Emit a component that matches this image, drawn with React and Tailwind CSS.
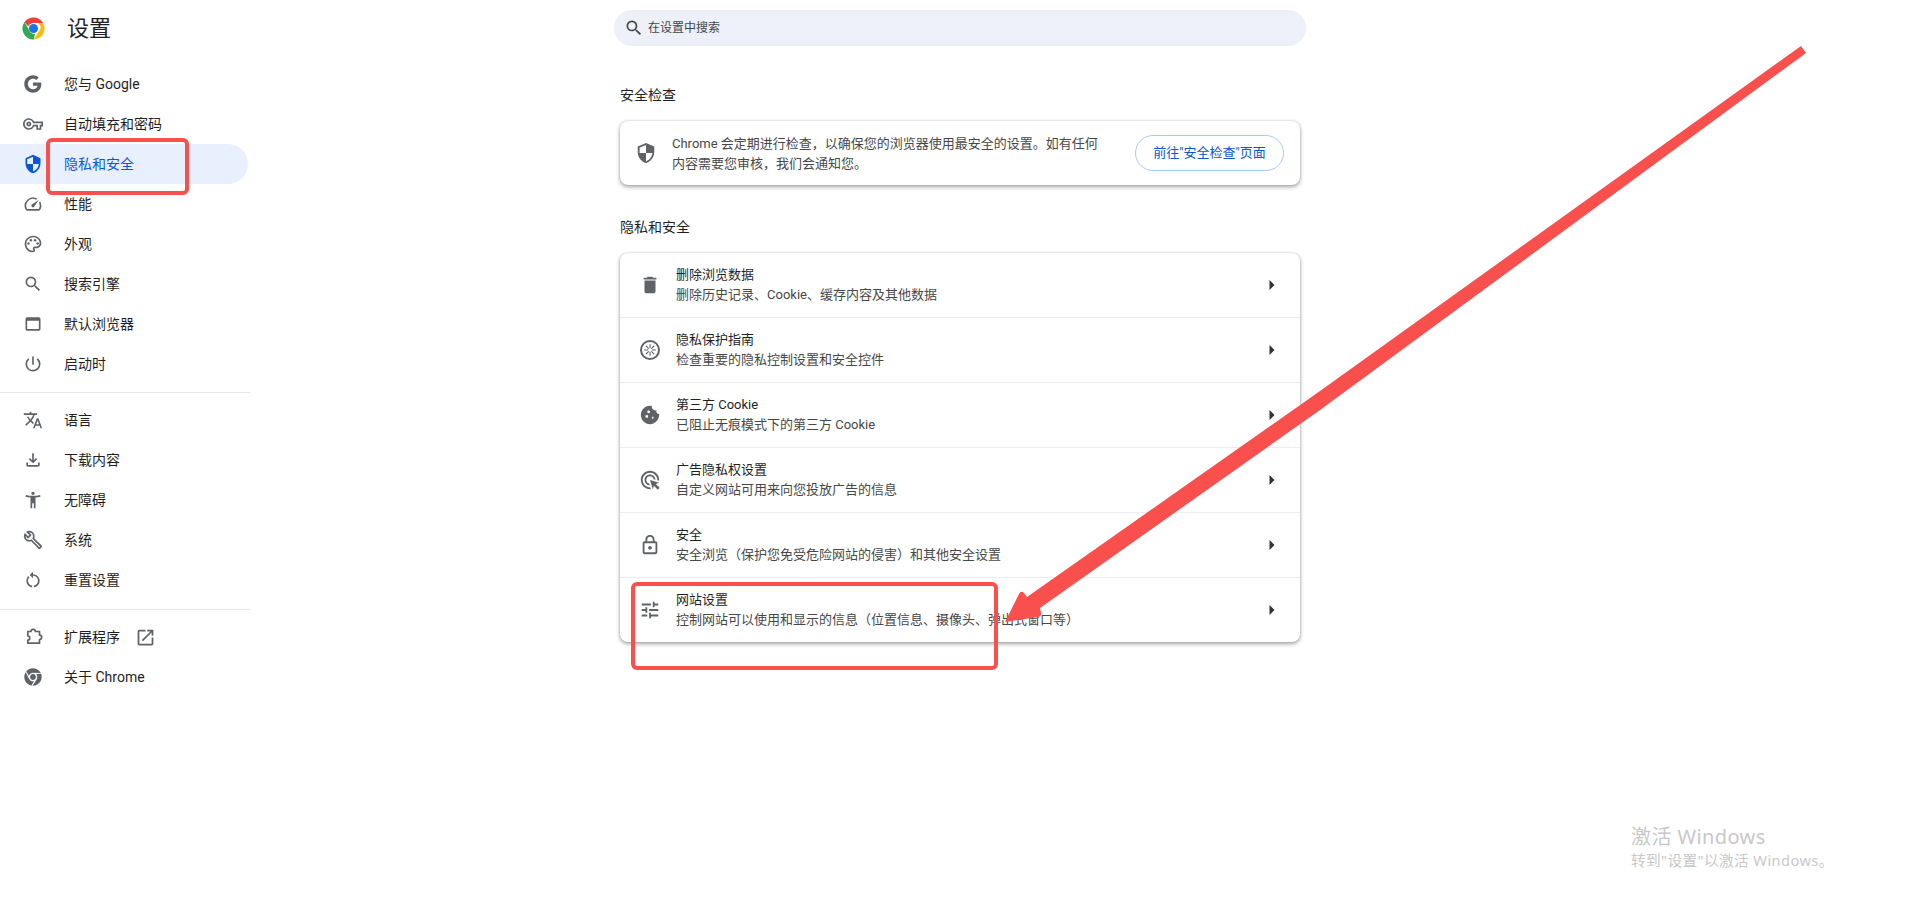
import React from "react";
import {
  MdOutlineVpnKey, MdSecurity, MdOutlineSpeed, MdOutlinePalette, MdSearch, MdWebAsset,
  MdPowerSettingsNew, MdTranslate, MdOutlineFileDownload, MdAccessibilityNew, MdOutlineBuild,
  MdRestartAlt, MdOpenInNew, MdDelete, MdCookie, MdAdsClick, MdOutlineLock, MdTune,
} from "react-icons/md";
import { FaChrome } from "react-icons/fa";

const GoogleG = ({ size = 20 }) => (
  <svg width={size} height={size} viewBox="0 0 24 24" fill="currentColor">
    <path d="M21.6 10.1H12v4h5.5c-.5 2.6-2.7 4.1-5.5 4.1-3.4 0-6.1-2.8-6.1-6.2S8.600 5.800 12 5.800c1.500 0 2.800.5 3.900 1.400l3-3C17 2.500 14.700 1.500 12 1.500 6.200 1.500 1.500 6.200 1.500 12S6.200 22.500 12 22.500c5.300 0 10-3.800 10-10.500 0-.6-.1-1.300-.4-1.900z" />
  </svg>
);

const ChromeLogo = () => (
  <svg width="23" height="23" viewBox="0 0 48 48">
    <circle cx="24" cy="24" r="23" fill="#fff" />
    <path d="M24 1a23 23 0 0 1 19.900 11.500H24a11.500 11.500 0 0 0-10.800 7.500L5.300 10.600A23 23 0 0 1 24 1z" fill="#ea4335" />
    <path d="M43.900 12.500A23 23 0 0 1 25 47l9-15.500a11.500 11.500 0 0 0 0-19z" fill="#fbbc04" />
    <path d="M25 47A23 23 0 0 1 5.300 10.600L14 25.500A11.500 11.500 0 0 0 27 35.100z" fill="#34a853" />
    <circle cx="24" cy="24" r="9.500" fill="#1a73e8" />
  </svg>
);

const SandboxIcon = () => (
  <svg width="22" height="22" viewBox="0 0 22 22" fill="none" stroke="currentColor">
    <circle cx="11" cy="11" r="9" strokeWidth="2" />
    <path d="M11 9.200V5.200M11 12.800v4M9.200 11h-4M12.800 11h4M9.700 9.700L6.900 6.900M12.300 12.300l2.800 2.800M12.300 9.700l2.800-2.800M9.700 12.300l-2.800 2.800" strokeWidth="1.100" />
  </svg>
);

const ExtensionIcon = () => (
  <svg width="20" height="20" viewBox="0 0 20 20" fill="none" stroke="currentColor" strokeWidth="1.700" strokeLinejoin="round">
    <path d="M4.800 4.500H8a2.200 2.200 0 0 1 4.400 0h4.100v3.600a2.200 2.200 0 0 1 0 4.400v3.700H4.800v-3.200a2 2 0 0 0 0-4z" />
  </svg>
);

const nav1 = [
  [<GoogleG />, "您与 Google"],
  [<MdOutlineVpnKey size={20} />, "自动填充和密码"],
  [<MdSecurity size={20} />, "隐私和安全", true],
  [<MdOutlineSpeed size={20} />, "性能"],
  [<MdOutlinePalette size={20} />, "外观"],
  [<MdSearch size={20} />, "搜索引擎"],
  [<MdWebAsset size={20} />, "默认浏览器"],
  [<MdPowerSettingsNew size={20} />, "启动时"],
];
const nav2 = [
  [<MdTranslate size={20} />, "语言"],
  [<MdOutlineFileDownload size={20} />, "下载内容"],
  [<MdAccessibilityNew size={20} />, "无障碍"],
  [<MdOutlineBuild size={20} />, "系统"],
  [<MdRestartAlt size={20} />, "重置设置"],
];
const rows = [
  [<MdDelete size={22} />, "删除浏览数据", "删除历史记录、Cookie、缓存内容及其他数据"],
  [<SandboxIcon />, "隐私保护指南", "检查重要的隐私控制设置和安全控件"],
  [<MdCookie size={22} />, "第三方 Cookie", "已阻止无痕模式下的第三方 Cookie"],
  [<MdAdsClick size={22} />, "广告隐私权设置", "自定义网站可用来向您投放广告的信息"],
  [<MdOutlineLock size={22} />, "安全", "安全浏览（保护您免受危险网站的侵害）和其他安全设置"],
  [<MdTune size={22} />, "网站设置", "控制网站可以使用和显示的信息（位置信息、摄像头、弹出式窗口等）"],
];

function NavRow({ icon, label, active, extra }) {
  return (
    <div className={`h-10 flex items-center pl-[23px] w-[248px] rounded-r-full text-[14px] ${active ? "bg-[#e8f0fe] text-[#0b57d0]" : "text-[#1f1f1f]"}`}>
      <span className={`w-5 h-5 flex items-center justify-center shrink-0 ${active ? "text-[#0b57d0]" : "text-[#5f6368]"}`}>{icon}</span>
      <span className="ml-[21px]">{label}</span>
      {extra}
    </div>
  );
}

export default function App() {
  return (
    <div className="relative flex w-full h-[919px] overflow-hidden bg-white font-['Roboto','Noto_Sans_CJK_SC',sans-serif]">
      <aside className="w-[250px] shrink-0">
        <div className="h-[56px] flex items-center pl-[22px]">
          <ChromeLogo />
          <span className="ml-[22px] text-[22px] text-[#1f1f1f]">设置</span>
        </div>
        <div className="mt-2">
          {nav1.map(([i, l, a]) => <NavRow key={l} icon={i} label={l} active={a} />)}
        </div>
        <div className="mt-2 mb-[7px] h-px bg-[#e6e6e6]" />
        {nav2.map(([i, l]) => <NavRow key={l} icon={i} label={l} />)}
        <div className="mt-[9px] mb-[7px] h-px bg-[#e6e6e6]" />
        <NavRow
          icon={<ExtensionIcon />}
          label="扩展程序"
          extra={<MdOpenInNew size={21} className="ml-[15px] text-[#5f6368]" />}
        />
        <NavRow icon={<FaChrome size={18} />} label="关于 Chrome" />
      </aside>

      <main className="ml-[370px] w-[680px] pt-[10px]">
        <div className="-mx-[6px] h-9 rounded-full bg-[#edf0f8] flex items-center pl-[10px] text-[12px] text-[#444746]">
          <MdSearch size={20} className="text-[#444746]" />
          <span className="ml-[4px]">在设置中搜索</span>
        </div>

        <h2 className="mt-[39px] h-5 leading-5 text-[14px] font-normal text-[#1f1f1f]">安全检查</h2>
        <section className="mt-4 h-16 rounded-lg bg-white shadow-[0_2px_4px_rgba(0,0,0,0.35),0_0_2px_rgba(0,0,0,0.2)] flex items-center">
          <span className="ml-[15px] w-[22px] flex justify-center text-[#5f6368]"><MdSecurity size={22} /></span>
          <p className="ml-[15px] pt-px text-[13px] leading-[20px] text-[#474747]">
            Chrome 会定期进行检查，以确保您的浏览器使用最安全的设置。如有任何<br />内容需要您审核，我们会通知您。
          </p>
          <button className="ml-auto mr-4 w-[149px] h-9 rounded-full border border-[#a8c7fa] bg-white text-[13px] text-[#0b57d0]">
            前往"安全检查"页面
          </button>
        </section>

        <h2 className="mt-8 h-5 leading-5 text-[14px] font-normal text-[#1f1f1f]">隐私和安全</h2>
        <section className="mt-4 rounded-lg bg-white shadow-[0_2px_4px_rgba(0,0,0,0.35),0_0_2px_rgba(0,0,0,0.2)] divide-y divide-[#ececec]">
          {rows.map(([icon, title, sub]) => (
            <div key={title} className="h-16 box-content flex items-center">
              <span className="ml-[19px] w-[22px] h-[22px] flex items-center justify-center text-[#5f6368] shrink-0">{icon}</span>
              <div className="ml-[15px] text-[13px] leading-5">
                <div className="text-[#1f1f1f]">{title}</div>
                <div className="text-[#474747]">{sub}</div>
              </div>
              <svg className="ml-auto mr-[25px] shrink-0" width="6" height="10" viewBox="0 0 6 10">
                <path d="M0.500 0l5 5-5 5z" fill="#333" />
              </svg>
            </div>
          ))}
        </section>
      </main>

      {/* annotations drawn over the page */}
      <div className="absolute left-[46px] top-[138px] w-[143px] h-[57px] border-4 border-[#f94f4d] rounded-[6px]" />
      <div className="absolute left-[631px] top-[582px] w-[367px] h-[88px] border-4 border-[#f94f4d] rounded-[6px]" />
      <svg className="absolute left-0 top-0 pointer-events-none" width="1920" height="919" viewBox="0 0 1920 919">
        <path
          d="M1005 622 L1019 594 Q1021 590 1024 593 L1027 597 L1320 391 L1801 46 L1806 53 L1320 410 L1040 608 L1041 613 Q1042 616 1038 617 Z"
          fill="#f94f4d"
        />
      </svg>

      <div className="absolute left-[1631px] top-[823px] text-[#c8c8c8] pointer-events-none font-['Noto_Sans','Noto_Sans_CJK_SC',sans-serif]">
        <div className="text-[20px] leading-7 tracking-[0.4px]">激活 Windows</div>
        <div className="text-[14.67px] leading-5 -mt-px tracking-[0.4px]">转到"设置"以激活 Windows。</div>
      </div>
    </div>
  );
}
